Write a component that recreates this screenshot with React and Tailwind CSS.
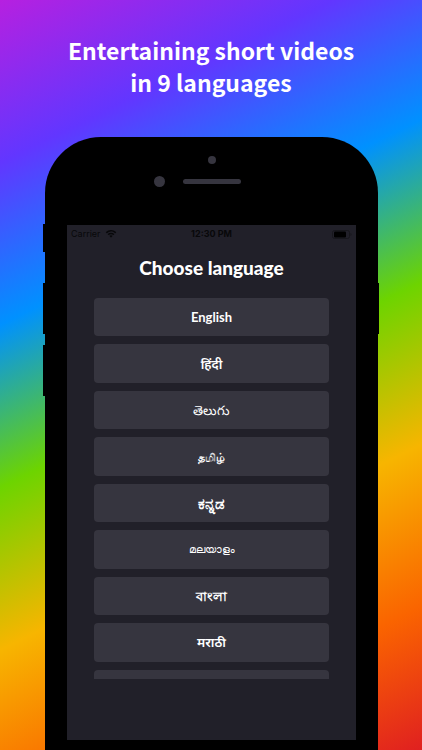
const languages = [
  { name: 'English', text: 'text-[13px] font-bold' },
  { name: 'हिंदी', text: 'text-[13px] font-semibold' },
  { name: 'తెలుగు', text: 'text-[13px] font-normal' },
  { name: 'தமிழ்', text: 'text-[11px] font-bold' },
  { name: 'ಕನ್ನಡ', text: 'text-[15px] font-bold' },
  { name: 'മലയാളം', text: 'text-[11px] font-normal' },
  { name: 'বাংলা', text: 'text-[13px] font-bold' },
  { name: 'मराठी', text: 'text-[13px] font-semibold' },
]

function WifiIcon() {
  return (
    <svg viewBox="0 0 24 17" className="h-2 w-3" fill="currentColor" aria-hidden="true">
      <path d="M12 3.4c3.3 0 6.3 1.3 8.5 3.4.2.2.5.2.6 0l1.6-1.7c.2-.2.2-.5 0-.6A15.5 15.5 0 0 0 1.3 4.5c-.2.1-.2.4 0 .6l1.6 1.7c.1.2.4.2.6 0A12.3 12.3 0 0 1 12 3.4Z" />
      <path d="M12 9c1.8 0 3.5.7 4.7 1.8.2.2.5.2.7 0l1.6-1.7c.2-.2.2-.5 0-.7a10.1 10.1 0 0 0-14 0c-.2.2-.2.5 0 .7l1.6 1.7c.2.2.5.2.7 0A6.9 6.9 0 0 1 12 9Z" />
      <path d="M15.2 12.4c.2.2.2.4 0 .6l-2.9 3c-.2.2-.4.2-.6 0l-2.9-3c-.2-.2-.2-.4 0-.6a4.9 4.9 0 0 1 6.4 0Z" />
    </svg>
  )
}

function BatteryIcon() {
  return (
    <svg viewBox="0 0 20 9" className="h-[9px] w-5" aria-hidden="true">
      <rect x="0.5" y="0.5" width="17" height="8" rx="2" fill="none" stroke="#17171c" />
      <rect x="2" y="1.5" width="12" height="6" rx="1" fill="#000" />
      <path d="M18.5 3v3c.7-.3 1-.8 1-1.5s-.3-1.2-1-1.5Z" fill="#17171c" />
    </svg>
  )
}

function StatusBar() {
  return (
    <div className="grid grid-cols-3 items-center px-1 pt-px font-['Inter',sans-serif] text-[9px] leading-4 text-[#08080a]">
      <div className="flex items-center gap-1">
        <span>Carrier</span>
        <WifiIcon />
      </div>
      <span className="text-center font-bold">12:30 PM</span>
      <div className="flex justify-end">
        <BatteryIcon />
      </div>
    </div>
  )
}

function LanguageButton({ name, text }) {
  return (
    <button
      type="button"
      className={`rounded bg-[#36353f] text-center font-['Lato','Noto_Sans',sans-serif] leading-5 text-white ${text}`}
    >
      {name}
    </button>
  )
}

export default function App() {
  return (
    <main className="flex min-h-screen flex-col overflow-hidden bg-[linear-gradient(154deg,#b620e0,#6236ff_17%,#0091ff_34%,#6dd400_51%,#f7b500_68%,#fa6400_85%,#e02020)]">
      <h1 className="pt-[34px] text-center font-['Noto_Sans_CJK_JP',sans-serif] text-[23px] leading-8 font-bold text-white">
        Entertaining short videos
        <br />
        in 9 languages
      </h1>

      <div className="relative mt-[39px] mr-11 ml-[45px] flex flex-1 flex-col rounded-t-[56px] bg-black px-[22px] pb-[10px]">
        {/* side buttons */}
        <span className="absolute top-[87px] -left-[2px] h-7 w-1 bg-black" />
        <span className="absolute top-[146px] -left-[2px] h-[51px] w-1 bg-black" />
        <span className="absolute top-[208px] -left-[2px] h-[51px] w-1 bg-black" />
        <span className="absolute top-[146px] -right-px h-[51px] w-1 bg-black" />

        {/* sensor, camera and speaker */}
        <div className="flex h-[88px] flex-col items-center gap-3 pt-[19px]">
          <span className="size-2 rounded-full bg-[#36353f]" />
          <div className="grid w-full grid-cols-[1fr_auto_1fr] items-center gap-[18px]">
            <span className="size-[11px] justify-self-end rounded-full bg-[#36353f]" />
            <span className="h-[5px] w-[58px] rounded-full bg-[#36353f]" />
          </div>
        </div>

        <section className="flex flex-1 flex-col bg-[#212029]">
          <StatusBar />
          <h2 className="mt-3 text-center font-['Lato',sans-serif] text-[19px] leading-7 font-black text-white">
            Choose language
          </h2>
          <div className="mx-[27px] mt-4 h-[381px] overflow-hidden">
            <div className="grid h-[410px] auto-rows-fr gap-2">
              {languages.map((language) => (
                <LanguageButton key={language.name} {...language} />
              ))}
              {/* next row, scrolled out of view */}
              <span className="rounded bg-[#36353f]" />
            </div>
          </div>
        </section>
      </div>
    </main>
  )
}
